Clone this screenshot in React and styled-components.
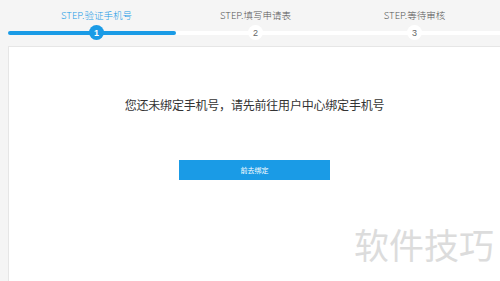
import React from 'react';
import styled, { createGlobalStyle } from 'styled-components';

const GlobalStyle = createGlobalStyle`
   html, body {
      margin: 0;
      padding: 0;
      background: #f5f5f5;
      font-family: "Noto Sans CJK SC", "Noto Sans", sans-serif;
      overflow: hidden;
   }
`;

const Page = styled.div`
   width: 500px;
   height: 281px;
   display: flex;
   flex-direction: column;
   position: relative;
   overflow: hidden;
`;

const Stepper = styled.div`
   position: relative;
   height: 46px;
   padding-left: 17px;
   display: grid;
   grid-template-columns: repeat(3, 159px);
`;

const Track = styled.div`
   position: absolute;
   left: 8px;
   right: 0;
   top: 31px;
   height: 4px;
   background: #fff;
   border-radius: 2px 0 0 2px;
   &::before {
      content: '';
      position: absolute;
      left: 0;
      top: 0;
      bottom: 0;
      width: ${(p) => p.$fill}px;
      background: #1a9be6;
      border-radius: 2px;
   }
`;

const Step = styled.div`
   position: relative;
   display: flex;
   flex-direction: column;
   align-items: center;
   padding-top: 9px;
`;

const StepLabel = styled.div`
   font-size: 9.5px;
   line-height: 13px;
   white-space: nowrap;
   font-weight: 300;
   color: ${(p) => (p.$active ? '#1a9be6' : '#555')};
`;

const StepDot = styled.div`
   margin-top: 3px;
   width: 15px;
   height: 15px;
   border-radius: 50%;
   display: flex;
   align-items: center;
   justify-content: center;
   font-size: 9px;
   font-family: "Liberation Sans", sans-serif;
   background: ${(p) => (p.$active ? '#1a9be6' : '#fff')};
   color: ${(p) => (p.$active ? '#fff' : '#666')};
   font-weight: ${(p) => (p.$active ? 700 : 400)};
`;

const Panel = styled.div`
   flex: 1;
   margin-left: 8px;
   background: #fff;
   border: 1px solid #e6e6e6;
   border-right: none;
   border-bottom: none;
   display: flex;
   flex-direction: column;
   align-items: center;
`;

const Message = styled.div`
   margin-top: 50px;
   font-size: 12px;
   line-height: 16px;
   color: #333;
   letter-spacing: -0.2px;
`;

const BindButton = styled.button`
   margin-top: 47px;
   width: 151px;
   height: 20px;
   border: none;
   background: #1a9be6;
   color: #fff;
   font-family: inherit;
   font-size: 7px;
   padding: 0;
   cursor: pointer;
`;

const Watermark = styled.div`
   position: absolute;
   left: 354px;
   top: 222px;
   font-size: 35px;
   line-height: 44px;
   color: #dcdcdc;
   pointer-events: none;
`;

const steps = ['STEP.验证手机号', 'STEP.填写申请表', 'STEP.等待审核'];

const App = () => {
   return (
      <>
         <GlobalStyle />
         <Page>
            <Stepper>
               <Track $fill={168} />
               {steps.map((s, i) => (
                  <Step key={s}>
                     <StepLabel $active={i === 0}>{s}</StepLabel>
                     <StepDot $active={i === 0}>{i + 1}</StepDot>
                  </Step>
               ))}
            </Stepper>
            <Panel>
               <Message>您还未绑定手机号，请先前往用户中心绑定手机号</Message>
               <BindButton>前去绑定</BindButton>
            </Panel>
            <Watermark>软件技巧</Watermark>
         </Page>
      </>
   );
};

export default App;
